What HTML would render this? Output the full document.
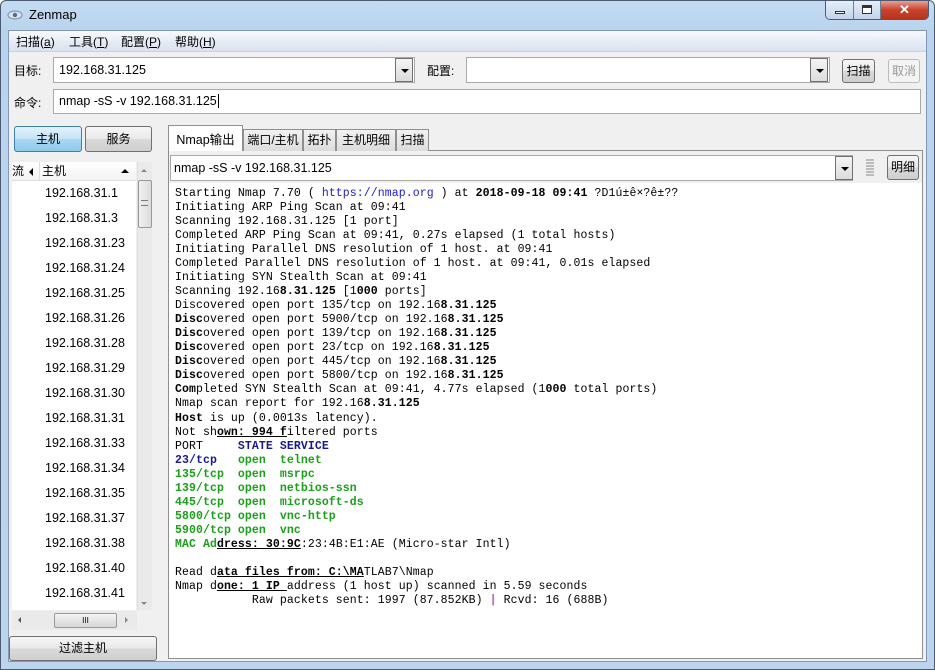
<!DOCTYPE html>
<html><head><meta charset="utf-8"><style>
*{box-sizing:border-box;margin:0;padding:0}
body{width:935px;height:670px;overflow:hidden;background:#fff;font-family:"Liberation Sans","Noto Sans CJK SC",sans-serif;font-size:12px;color:#000;position:relative}
.abs{position:absolute}
#frame{left:0;top:0;width:935px;height:670px;background:linear-gradient(#c4dcf3 0,#b9d3ee 30px,#bcd4ec 100%);border:1px solid #4a5a70;border-radius:6px 6px 0 0}
#client{left:8px;top:30px;width:919px;height:632px;background:#f0f0f0;border:1px solid #8397b4}
#menu{left:9px;top:31px;width:917px;height:21px;background:linear-gradient(#f8f9fc,#e4eaf5 60%,#dae3f1);border-bottom:1px solid #c9d2e0}
.mi{top:33px;font-size:12px}
.lbl{font-size:12px}
.inp{background:#fff;border:1px solid #a9a9a9;font-size:12.5px;padding-left:5px;line-height:24px}
.ddb{width:18px;background:linear-gradient(#f4f4f4,#dcdcdc);border:1px solid #707070;}
.ddb:after{content:"";position:absolute;left:5px;top:10px;border:4px solid transparent;border-top:4px solid #000;border-bottom:0}
.btn{background:linear-gradient(#f6f6f6 0,#e9e9e9 50%,#d9d9d9 51%,#cfcfcf);border:1px solid #707070;border-radius:3px;text-align:center;font-size:12px}
.tab{top:129px;height:22px;background:linear-gradient(#f2f2f2,#dcdcdc);border:1px solid #8e8f8f;border-bottom:none;text-align:center;font-size:12px;line-height:20px}
pre{font-family:"Liberation Mono",monospace;font-size:11.5px;letter-spacing:0.09px;line-height:14.03px;position:absolute;left:175px;top:187px;white-space:pre;color:#000}
b{font-weight:bold}
.u{text-decoration:underline}
.bl{color:#2020c8}
.nv{color:#1a1a8c;font-weight:bold}
.g{color:#1aa01a;font-weight:bold}
.row{left:45px;font-size:12.5px;width:90px}
</style></head><body>
<div id="frame" class="abs"></div>
<svg class="abs" style="left:7px;top:9px" width="16" height="12"><ellipse cx="8" cy="6" rx="7" ry="4" fill="#d8e4f0" stroke="#7a8aa0"/><circle cx="8" cy="6" r="2.2" fill="#5a6c88"/></svg>
<div class="abs" style="left:29px;top:7px;font-size:13px">Zenmap</div>
<div class="abs" style="left:825px;top:1px;width:104px;height:19px;border:1px solid #4a5a70;border-top:none;border-radius:0 0 5px 5px;overflow:hidden;display:flex">
<div style="width:28px;background:linear-gradient(#e6eef8,#c2d4ea);border-right:1px solid #6d7f98;position:relative"><div class="abs" style="left:9px;top:10px;width:10px;height:3px;background:#fff;border:1px solid #333"></div></div>
<div style="width:27px;background:linear-gradient(#e6eef8,#c2d4ea);border-right:1px solid #6d7f98;position:relative"><div class="abs" style="left:8px;top:4px;width:10px;height:9px;border:1px solid #333;background:#fff;box-shadow:inset 0 2px 0 #333"></div></div>
<div style="flex:1;background:linear-gradient(#e8a090,#c7432c 50%,#b8321c);color:#fff;text-align:center;font-weight:bold;font-size:13px;line-height:17px">✕</div>
</div>
<div id="client" class="abs"></div>
<div id="menu" class="abs"></div>
<div class="abs mi" style="left:16px">扫描(<span class="u">a</span>)</div>
<div class="abs mi" style="left:69px">工具(<span class="u">T</span>)</div>
<div class="abs mi" style="left:121px">配置(<span class="u">P</span>)</div>
<div class="abs mi" style="left:175px">帮助(<span class="u">H</span>)</div>

<div class="abs lbl" style="left:14px;top:62px">目标:</div>
<div class="abs inp" style="left:53px;top:57px;width:362px;height:26px">192.168.31.125</div>
<div class="abs ddb" style="left:395px;top:58px;height:24px"></div>
<div class="abs lbl" style="left:427px;top:62px">配置:</div>
<div class="abs inp" style="left:466px;top:57px;width:364px;height:26px"></div>
<div class="abs ddb" style="left:810px;top:58px;height:24px"></div>
<div class="abs btn" style="left:842px;top:59px;width:33px;height:24px;line-height:22px">扫描</div>
<div class="abs btn" style="left:888px;top:59px;width:32px;height:24px;line-height:22px;color:#999;border-color:#bbb;background:#f4f4f4">取消</div>
<div class="abs lbl" style="left:14px;top:94px">命令:</div>
<div class="abs inp" style="left:53px;top:89px;width:868px;height:25px;line-height:23px">nmap -sS -v 192.168.31.125<span style="border-left:1px solid #000;margin-left:1px"></span></div>

<div class="abs btn" style="left:14px;top:126px;width:68px;height:26px;line-height:24px;background:linear-gradient(#e4f2fb,#c4e3f6 50%,#a9d8f3 51%,#8fc9ea);border-color:#3c7fb1">主机</div>
<div class="abs btn" style="left:85px;top:126px;width:67px;height:26px;line-height:24px">服务</div>

<div class="abs" style="left:12px;top:162px;width:124px;height:448px;background:#fff"></div>
<div class="abs" style="left:12px;top:162px;width:124px;height:19px;background:linear-gradient(#fff,#f3f3f3);border-bottom:1px solid #e0e0e0;font-size:12px;line-height:19px">
<span class="abs" style="left:0">流</span><span class="abs" style="left:17px;top:6px;border:4px solid transparent;border-right:4px solid #000;border-left:0"></span>
<span class="abs" style="left:27px;top:0;height:19px;border-left:1px solid #ddd"></span>
<span class="abs" style="left:30px">主机</span><span class="abs" style="left:109px;top:7px;border:4px solid transparent;border-bottom:4px solid #000;border-top:0"></span></div>
<div class="abs" style="left:137px;top:162px;width:15px;height:448px;background:#eaeaea;border-left:1px solid #ddd"></div>
<div class="abs" style="left:141px;top:169px;border:3px solid transparent;border-bottom:3px solid #888;border-top:0"></div>
<div class="abs" style="left:138px;top:180px;width:14px;height:48px;background:linear-gradient(90deg,#f0f0f0,#dcdcdc);border:1px solid #999;border-radius:2px"></div>
<div class="abs" style="left:141px;top:200px;width:7px;height:6px;border-top:1px solid #777;border-bottom:1px solid #777"></div>
<div class="abs" style="left:141px;top:602px;border:3px solid transparent;border-top:3px solid #888;border-bottom:0"></div>
<div class="abs" style="left:12px;top:611px;width:125px;height:19px;background:#eaeaea"></div>
<div class="abs" style="left:18px;top:617px;border:3px solid transparent;border-right:3px solid #555;border-left:0"></div>
<div class="abs" style="left:54px;top:613px;width:63px;height:15px;background:linear-gradient(#f4f4f4,#d6d6d6);border:1px solid #999;border-radius:2px;text-align:center;font-size:8px;line-height:13px">III</div>
<div class="abs" style="left:125px;top:617px;border:3px solid transparent;border-left:3px solid #888;border-right:0"></div>
<div class="abs btn" style="left:9px;top:636px;width:148px;height:25px;line-height:23px">过滤主机</div>

<div class="abs row" style="top:186px">192.168.31.1</div>
<div class="abs row" style="top:211px">192.168.31.3</div>
<div class="abs row" style="top:236px">192.168.31.23</div>
<div class="abs row" style="top:261px">192.168.31.24</div>
<div class="abs row" style="top:286px">192.168.31.25</div>
<div class="abs row" style="top:311px">192.168.31.26</div>
<div class="abs row" style="top:336px">192.168.31.28</div>
<div class="abs row" style="top:361px">192.168.31.29</div>
<div class="abs row" style="top:386px">192.168.31.30</div>
<div class="abs row" style="top:411px">192.168.31.31</div>
<div class="abs row" style="top:436px">192.168.31.33</div>
<div class="abs row" style="top:461px">192.168.31.34</div>
<div class="abs row" style="top:486px">192.168.31.35</div>
<div class="abs row" style="top:511px">192.168.31.37</div>
<div class="abs row" style="top:536px">192.168.31.38</div>
<div class="abs row" style="top:561px">192.168.31.40</div>
<div class="abs row" style="top:586px">192.168.31.41</div>

<div class="abs" style="left:168px;top:150px;width:755px;height:509px;background:#fff;border:1px solid #8e8f8f"></div>
<div class="abs tab" style="left:243px;width:60px">端口/主机</div>
<div class="abs tab" style="left:303px;width:33px">拓扑</div>
<div class="abs tab" style="left:336px;width:60px">主机明细</div>
<div class="abs tab" style="left:396px;width:33px">扫描</div>
<div class="abs tab" style="left:168px;top:125px;width:75px;height:27px;background:#fff;line-height:28px;font-size:12.5px">Nmap输出</div>
<div class="abs" style="left:169px;top:151px;width:753px;height:32px;background:#f0f0f0"></div>
<div class="abs inp" style="left:170px;top:155px;width:683px;height:26px;font-size:12.5px;padding-left:3px">nmap -sS -v 192.168.31.125</div>
<div class="abs ddb" style="left:835px;top:156px;height:24px"></div>
<div class="abs" style="left:866px;top:159px;width:8px;height:17px;background:repeating-linear-gradient(#bbb 0 2px,transparent 2px 3px)"></div>
<div class="abs btn" style="left:887px;top:155px;width:32px;height:25px;line-height:23px">明细</div>
<div class="abs" style="left:170px;top:183px;width:752px;height:475px;background:#fff"></div>
<pre>Starting Nmap 7.70 ( <span class="bl">https://nmap.org</span> ) at <b>2018-09-18 09:41</b> ?D1ú±ê×?ê±??
Initiating ARP Ping Scan at 09:41
Scanning 192.168.31.125 [1 port]
Completed ARP Ping Scan at 09:41, 0.27s elapsed (1 total hosts)
Initiating Parallel DNS resolution of 1 host. at 09:41
Completed Parallel DNS resolution of 1 host. at 09:41, 0.01s elapsed
Initiating SYN Stealth Scan at 09:41
Scanning 192.16<b>8.31.125</b> [1<b>000</b> ports]
Discovered open port 135/tcp on 192.16<b>8.31.125</b>
<b>Disc</b>overed open port 5900/tcp on 192.16<b>8.31.125</b>
<b>Disc</b>overed open port 139/tcp on 192.16<b>8.31.125</b>
<b>Disc</b>overed open port 23/tcp on 192.16<b>8.31.125</b>
<b>Disc</b>overed open port 445/tcp on 192.16<b>8.31.125</b>
<b>Disc</b>overed open port 5800/tcp on 192.16<b>8.31.125</b>
<b>Com</b>pleted SYN Stealth Scan at 09:41, 4.77s elapsed (1<b>000</b> total ports)
Nmap scan report for 192.16<b>8.31.125</b>
<b>Host</b> is up (0.0013s latency).
Not sh<b class="u">own: 994 f</b>iltered ports
PORT     <span class="nv">STATE SERVICE</span>
<span class="nv">23/tcp</span>   <span class="g">open  telnet</span>
<span class="g">135/tcp  open  msrpc</span>
<span class="g">139/tcp  open  netbios-ssn</span>
<span class="g">445/tcp  open  microsoft-ds</span>
<span class="g">5800/tcp open  vnc-http</span>
<span class="g">5900/tcp open  vnc</span>
<span class="g">MAC Ad</span><b class="u">dress: 30:9C</b>:23:4B:E1:AE (Micro-star Intl)

Read d<b class="u">ata files from: C:\MA</b>TLAB7\Nmap
Nmap d<b class="u">one: 1 IP </b>address (1 host up) scanned in 5.59 seconds
           Raw packets sent: 1997 (87.852KB) <span style="color:#800080">|</span> Rcvd: 16 (688B)</pre>
</body></html>
